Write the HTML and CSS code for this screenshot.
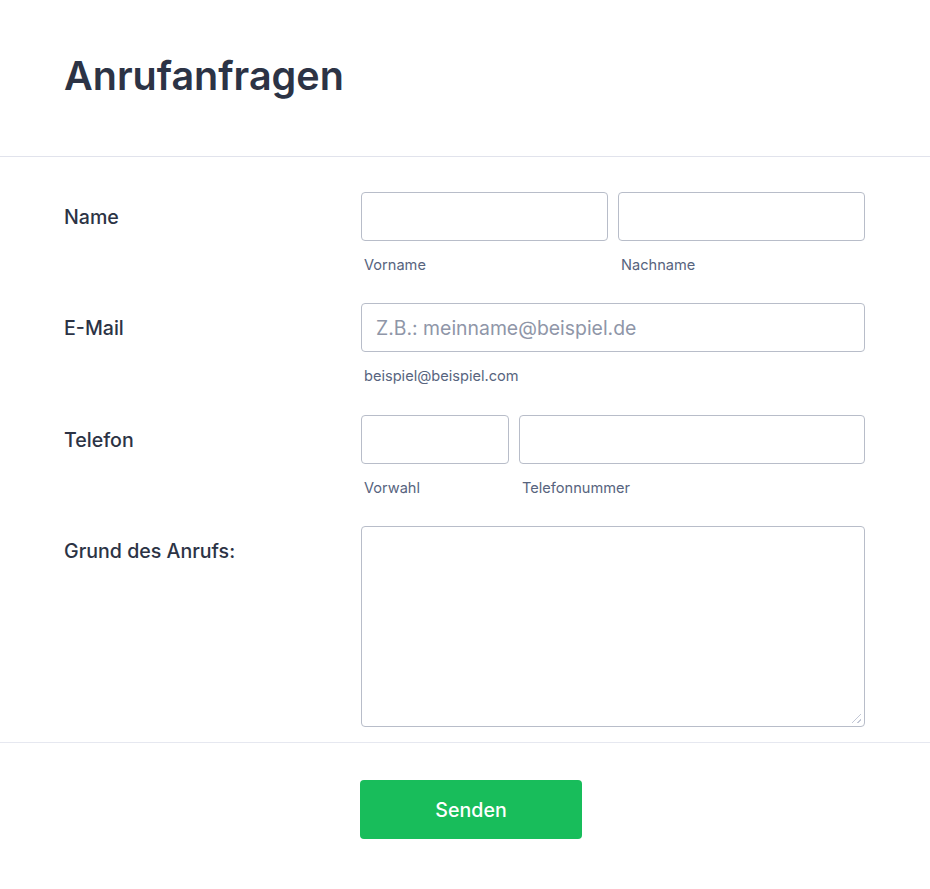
FILE: index.html
```html
<!DOCTYPE html>
<html lang="de">
<head>
  <meta charset="UTF-8">
  <meta name="viewport" content="width=device-width, initial-scale=1.0">
  <title>Anrufanfragen</title>
  <link rel="stylesheet" href="styles.css">
</head>
<body>
  <div class="form">
    <div class="form-header">
      <h1>Anrufanfragen</h1>
    </div>

    <form id="callForm">
      <div class="fields">
        <div class="form-line">
          <label class="form-label" for="firstName">Name</label>
          <div class="inputs">
            <div class="sub">
              <input type="text" id="firstName">
              <span class="sublabel">Vorname</span>
            </div>
            <div class="sub">
              <input type="text" id="lastName">
              <span class="sublabel">Nachname</span>
            </div>
          </div>
        </div>

        <div class="form-line">
          <label class="form-label" for="email">E-Mail</label>
          <div class="inputs">
            <div class="sub">
              <input type="email" id="email" placeholder="Z.B.: meinname@beispiel.de">
              <span class="sublabel">beispiel@beispiel.com</span>
            </div>
          </div>
        </div>

        <div class="form-line">
          <label class="form-label" for="area">Telefon</label>
          <div class="inputs">
            <div class="sub area">
              <input type="tel" id="area">
              <span class="sublabel">Vorwahl</span>
            </div>
            <div class="sub">
              <input type="tel" id="phone">
              <span class="sublabel">Telefonnummer</span>
            </div>
          </div>
        </div>

        <div class="form-line last">
          <label class="form-label" for="reason">Grund des Anrufs:</label>
          <div class="inputs textarea-wrap">
            <textarea id="reason"></textarea>
          </div>
        </div>
      </div>

      <div class="form-footer">
        <button type="submit" class="button">Senden</button>
      </div>
    </form>
  </div>
</body>
</html>
```

FILE: styles.css
```css
body {
  margin: 0;
  font-family: Inter, "Noto Sans", sans-serif;
  color: #2c3345;
  background-color: #fff;
}
.form {
  width: 930px;
}
.form-header {
  padding: 52px 64px 0;
  height: 104px;
  border-bottom: 1px solid #e1e3ec;
}
.form-header h1 {
  margin: 0;
  font-size: 39.5px;
  font-weight: 600;
  line-height: 48px;
}
.fields {
  padding: 35px 65px 0 64px;
  border-bottom: 1px solid #e6e8f0;
}
.form-line {
  display: flex;
  margin-bottom: 29.35px;
}
.form-line.last {
  margin-bottom: 15px;
}
.form-label {
  width: 297px;
  flex-shrink: 0;
  font-size: 19.6px;
  font-weight: 500;
  line-height: 50px;
}
.inputs {
  flex: 1;
  display: flex;
  gap: 10px;
}
.sub {
  flex: 1;
  display: flex;
  flex-direction: column;
}
.sub.area {
  flex: 0 0 148px;
}
.inputs input,
.inputs textarea {
  box-sizing: border-box;
  width: 100%;
  height: 49px;
  padding: 0 14px;
  border: 1px solid #b8bdc9;
  border-radius: 4px;
  font-family: inherit;
  font-size: 19.4px;
  color: #2c3345;
  background: #fff;
}
.inputs input::placeholder {
  color: #8f96a8;
}
.inputs textarea {
  display: block;
  height: 201px;
  padding: 10px 14px;
  resize: none;
}
.textarea-wrap {
  position: relative;
}
.textarea-wrap::after {
  content: "";
  position: absolute;
  right: 4px;
  bottom: 4px;
  width: 9px;
  height: 9px;
  background: linear-gradient(135deg,
    transparent 45%, #c3c8d6 45%, #c3c8d6 55%, transparent 55%,
    transparent 75%, #c3c8d6 75%, #c3c8d6 85%, transparent 85%);
  pointer-events: none;
}
.sublabel {
  margin-top: 16px;
  padding-left: 3px;
  font-size: 14.6px;
  line-height: 17px;
  color: #57647e;
}
.form-footer {
  display: flex;
  justify-content: center;
  padding: 37px 0 50px 12px;
}
.button {
  width: 222px;
  height: 59px;
  background-color: #18bd5b;
  color: #fff;
  border: none;
  border-radius: 4px;
  font-family: inherit;
  font-size: 19.6px;
  font-weight: 500;
  cursor: pointer;
}
.button:hover {
  background-color: #16aa52;
}
```
